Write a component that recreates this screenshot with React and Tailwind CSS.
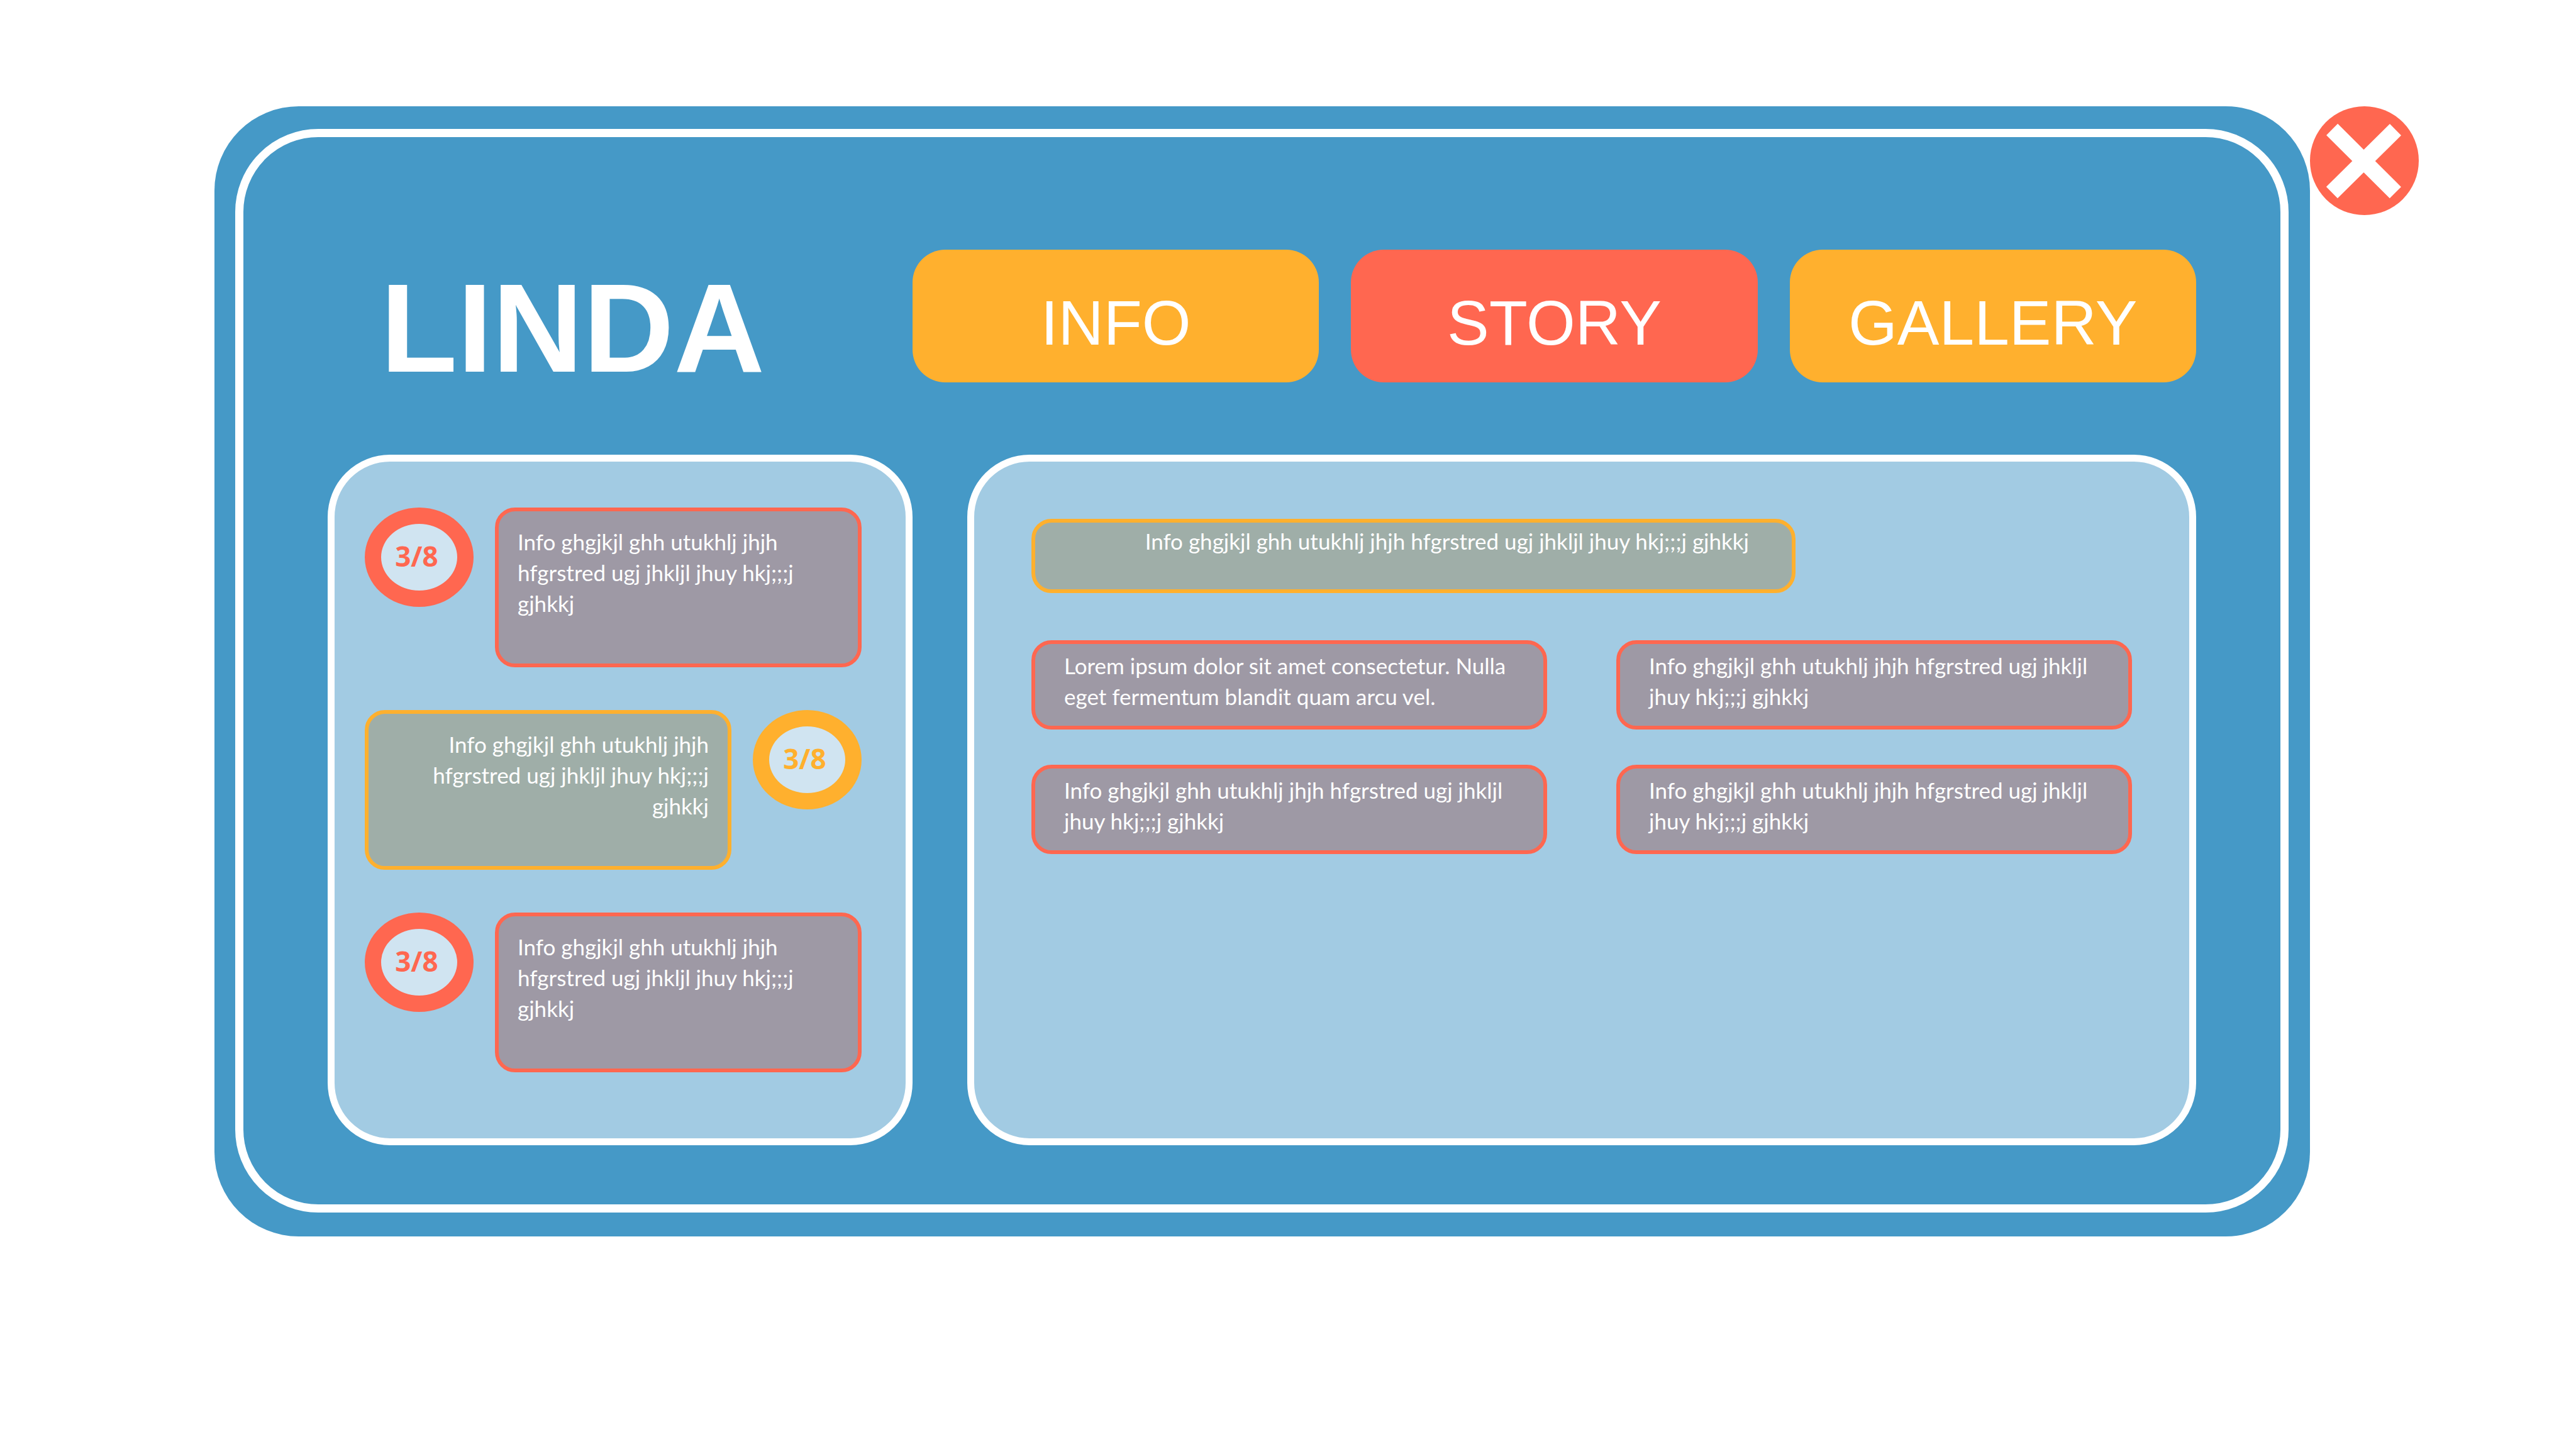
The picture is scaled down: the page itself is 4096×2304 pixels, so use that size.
const SAMPLE = "Info ghgjkjl ghh utukhlj jhjh hfgrstred ugj jhkljl jhuy hkj;;;j gjhkkj";

const tabs = [
  { label: "INFO", color: "bg-[#ffb02e]" },
  { label: "STORY", color: "bg-[#ff6750]" },
  { label: "GALLERY", color: "bg-[#ffb02e]" },
];

const progress = [
  { id: 1, flipped: false },
  { id: 2, flipped: true },
  { id: 3, flipped: false },
];

const facts = [
  "Lorem ipsum dolor sit amet consectetur. Nulla eget fermentum blandit quam arcu vel.",
  SAMPLE,
  SAMPLE,
  SAMPLE,
];

function Badge({ flipped }) {
  const tone = flipped
    ? "border-[#ffb02e] text-[#ffb02e]"
    : "border-[#ff6750] text-[#ff6750]";
  return (
    <div
      className={`flex h-[158px] w-[173px] shrink-0 items-center justify-center rounded-[50%] border-[26px] bg-[#d0e4f1] pr-[8px] pb-[4px] font-['Noto_Sans',sans-serif] text-[44px] leading-none font-bold ${tone}`}
    >
      3/8
    </div>
  );
}

function ProgressRow({ flipped }) {
  const row = flipped ? "flex-row-reverse" : "flex-row";
  const box = flipped
    ? "border-[#ffb02e] bg-[#9faea8] text-right"
    : "border-[#ff6750] bg-[#9e99a5]";
  return (
    <li className={`flex items-start gap-[34px] ${row}`}>
      <Badge flipped={flipped} />
      <p
        className={`min-h-[254px] flex-1 rounded-[32px] border-[6px] px-[30px] pt-[24px] ${box}`}
      >
        {SAMPLE}
      </p>
    </li>
  );
}

function CloseIcon() {
  return (
    <svg viewBox="0 0 243 243" className="h-full w-full" aria-hidden="true">
      <path
        d="M49.3 51.8 190.8 192.8M191 52.3 49 192.5"
        fill="none"
        stroke="white"
        strokeWidth="36"
      />
    </svg>
  );
}

export default function App() {
  return (
    <main className="flex min-h-screen items-start bg-white pt-[169px] pr-[250px] pb-[168px] pl-[341px] font-['Lato',sans-serif] text-[35px] leading-[49px] text-white">
      <section className="min-w-0 flex-1 rounded-[134px] bg-[#4599c7] pt-[36px] pr-[34px] pb-[38px] pl-[33px]">
        <div className="rounded-[132px] border-[13px] border-white px-[134px] pt-[179px] pb-[94px]">
          <header className="grid grid-cols-[930fr_2041fr] items-center font-['Liberation_Sans',sans-serif]">
            <h1 className="pt-[38px] pl-[84px] text-[200px] leading-[173px] font-bold">
              LINDA
            </h1>
            <nav className="grid grid-cols-3 gap-[51px]">
              {tabs.map((tab) => (
                <button
                  key={tab.label}
                  type="button"
                  className={`h-[211px] rounded-[52px] pt-[20px] text-[100px] leading-none ${tab.color}`}
                >
                  {tab.label}
                </button>
              ))}
            </nav>
          </header>

          <div className="mt-[115px] grid grid-cols-[930fr_1954fr] gap-[87px]">
            <ul className="flex flex-col gap-[68px] rounded-[99px] border-[11px] border-white bg-[#a2cbe3] pt-[73px] pr-[70px] pb-[105px] pl-[48px]">
              {progress.map((item) => (
                <ProgressRow key={item.id} flipped={item.flipped} />
              ))}
            </ul>

            <div className="rounded-[99px] border-[11px] border-white bg-[#a2cbe3] p-[91px]">
              <p className="mr-[535px] min-h-[118px] rounded-[32px] border-[6px] border-[#ffb02e] bg-[#9faea8] pt-[5px] pr-[68px] text-right">
                {SAMPLE}
              </p>
              <div className="mt-[75px] grid grid-cols-2 gap-x-[110px] gap-y-[56px]">
                {facts.map((fact, index) => (
                  <p
                    key={index}
                    className="min-h-[142px] rounded-[32px] border-[6px] border-[#ff6750] bg-[#9e99a5] pt-[10px] pr-[36px] pl-[46px]"
                  >
                    {fact}
                  </p>
                ))}
              </div>
            </div>
          </div>
        </div>
      </section>
      <button
        type="button"
        aria-label="Close"
        className="h-[173px] w-[173px] shrink-0 rounded-full bg-[#ff6750]"
      >
        <CloseIcon />
      </button>
    </main>
  );
}
